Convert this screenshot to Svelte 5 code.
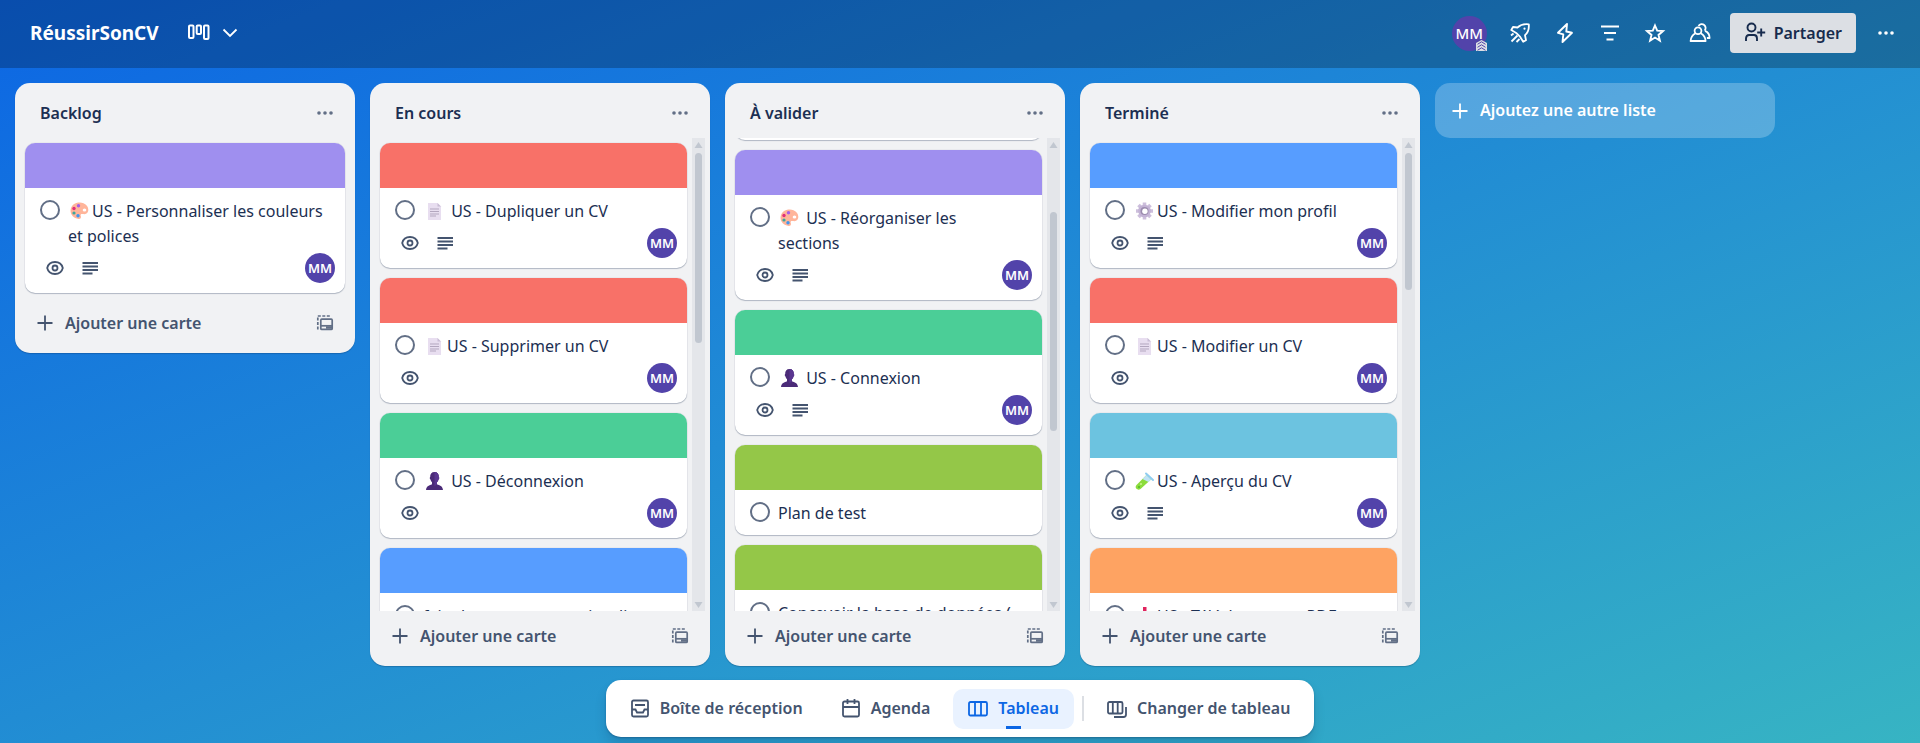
<script>
  const lists = [
    {
      name: 'Backlog',
      cards: [{ cover: '#9f8fef', emoji: 'palette', title: 'US - Personnaliser les couleurs et polices', watch: true, desc: true }]
    },
    {
      name: 'En cours',
      bar: { top: 0, height: 190 },
      cards: [
        { cover: '#f87168', emoji: 'page', space: true, title: 'US - Dupliquer un CV', watch: true, desc: true },
        { cover: '#f87168', emoji: 'page', title: 'US - Supprimer un CV', watch: true },
        { cover: '#4bce97', emoji: 'person', space: true, title: 'US - Déconnexion', watch: true },
        { cover: '#579dff', title: 'faire la page comme site client direct' }
      ]
    },
    {
      name: 'À valider',
      scroll: 93,
      bar: { top: 59, height: 219 },
      cards: [
        { cover: '#9f8fef', title: '' },
        { cover: '#9f8fef', emoji: 'palette', space: true, title: 'US - Réorganiser les sections', watch: true, desc: true },
        { cover: '#4bce97', emoji: 'person', space: true, title: 'US - Connexion', watch: true, desc: true },
        { cover: '#94c748', title: 'Plan de test' },
        { cover: '#94c748', title: 'Concevoir la base de données (' }
      ]
    },
    {
      name: 'Terminé',
      bar: { top: 0, height: 137 },
      cards: [
        { cover: '#579dff', emoji: 'gear', title: 'US - Modifier mon profil', watch: true, desc: true },
        { cover: '#f87168', emoji: 'page', title: 'US - Modifier un CV', watch: true },
        { cover: '#6cc3e0', emoji: 'tube', title: 'US - Aperçu du CV', watch: true, desc: true },
        { cover: '#fea362', emoji: 'inbox', title: 'US - Télécharger en PDF' }
      ]
    }
  ];

  function startAt(node, top) {
    node.scrollTop = top || 0;
  }
</script>

{#snippet dots()}
  <svg width="20" height="20" viewBox="0 0 20 20" fill="currentColor" aria-hidden="true">
    <circle cx="4" cy="10" r="1.8" /><circle cx="10" cy="10" r="1.8" /><circle cx="16" cy="10" r="1.8" />
  </svg>
{/snippet}

{#snippet plus()}
  <svg width="20" height="20" viewBox="0 0 20 20" fill="none" stroke="currentColor" stroke-width="1.8" aria-hidden="true">
    <path d="M10 2.5v15M2.5 10h15" />
  </svg>
{/snippet}

{#snippet emojiIcon(kind)}
  <svg class="emoji" width="24" height="18" viewBox="0 0 24 18" aria-hidden="true">
    {#if kind === 'palette'}
      <path d="M3 6C5 1 11-.5 15.500 1.200 19.500 2.700 21 6.500 20 9.500c-.8 2.400-3.100 3-5.200 2.500-1.800-.4-2.600.6-2 2.100.6 1.700-.5 3.100-2.200 2.800C5 16 1.200 11.500 3 6z" fill="#ffb59a" />
      <ellipse cx="16.500" cy="8" rx="1.800" ry="1.600" fill="#fff" />
      <circle cx="6" cy="6.500" r="1.700" fill="#e0307a" /><circle cx="10.500" cy="3.700" r="1.700" fill="#a45ee8" />
      <circle cx="6" cy="11" r="1.600" fill="#3fa79b" /><circle cx="10" cy="13.700" r="1.700" fill="#3f96f0" />
    {:else if kind === 'page'}
      <path d="M5 1h9.500L18 4.500V18H5z" fill="#e8def0" />
      <path d="M14.500 1 18 4.500h-3.500z" fill="#c8bcd4" />
      <path d="M7 7h9M7 9.500h9M7 12h9M7 14h6" stroke="#b3a7bf" stroke-width="1" />
    {:else if kind === 'person'}
      <path d="M11.500 0C8.500 0 7 2 7.200 5c-.7.300-.5 2 .3 2.500.4 1.500.9 2.200 1.500 2.800v2C6.500 13.500 3.500 13.700 3 18h17c-.5-4.300-3.500-4.500-6-5.700v-2c.6-.6 1.100-1.300 1.500-2.800.8-.5 1-2.200.3-2.500C16 2 14.500 0 11.500 0z" fill="#4b2b78" />
      <path d="M11.500 0C14.500 0 16 2 15.800 5c.7.300.5 2-.3 2.500-.4 1.500-.9 2.200-1.500 2.800v2l-2.500 2z" fill="#5a3690" />
    {:else if kind === 'gear'}
      <g stroke="#cdbfdc" stroke-width="3.600"><path d="M11.500.5v17M3 9h17M5.500 3l12 12M5.500 15l12-12" /></g>
      <circle cx="11.500" cy="9" r="6.300" fill="#c3b3d5" /><circle cx="11.500" cy="9" r="4" fill="#9b8bae" /><circle cx="11.900" cy="9.300" r="2.700" fill="#fff" />
    {:else if kind === 'tube'}
      <path d="M13.500 3 18 7.500 7.500 17C4.500 19 1 16 3.500 13z" fill="#8bdc3c" />
      <path d="M13.500 3 18 7.500 15.500 10 9.500 7z" fill="#bfe3f6" /><path d="m13 1.500 7 6.500" stroke="#8fcdf0" stroke-width="2" stroke-linecap="round" />
      <circle cx="8" cy="12" r="1" fill="#c9f58e" /><circle cx="6" cy="15" r="1" fill="#4eb52b" />
    {:else}
      <path d="M10 0h3.500v7H17l-5.200 6-5.300-6H10z" fill="#e0245e" />
      <path d="M3 11h4l2 3h5l2-3h4v7H3z" fill="#b9a8cd" />
    {/if}
  </svg>
{/snippet}

<div class="page">
  <header>
    <h1>RéussirSonCV</h1>
    <button class="view" aria-label="Vues">
      <svg width="22" height="18" viewBox="0 0 22 18" fill="none" stroke="currentColor" stroke-width="2" aria-hidden="true">
        <rect x="1" y="1.500" width="4.500" height="12.500" rx="1" /><rect x="8.700" y="1.500" width="4.300" height="8.500" rx="1" /><rect x="16" y="1.500" width="4.500" height="13.500" rx="1" />
      </svg>
      <svg width="16" height="16" viewBox="0 0 16 16" fill="none" stroke="currentColor" stroke-width="1.800" aria-hidden="true"><path d="m1.500 4.500 6.500 6.500 6.500-6.500" /></svg>
    </button>
    <div class="tools">
      <button class="me" aria-label="Membre MM">MM
        <span class="rank">
          <svg width="11" height="11" viewBox="0 0 11 11" aria-hidden="true"><path d="M0 3 5.500 0 11 3v8H0z" fill="#dcdfe4" /><path d="m1.500 4.300 4-2.500 4 2.500M1.500 7.300l4-2.500 4 2.500M1.500 10.300l4-2.500 4 2.500" fill="none" stroke="#5243aa" stroke-width="1" /></svg>
        </span>
      </button>
      <button class="tool" aria-label="Power-ups">
        <svg width="22" height="22" viewBox="0 0 22 22" fill="none" stroke="currentColor" stroke-width="1.800" stroke-linejoin="round" aria-hidden="true">
          <path d="M8.500 5.500C11.500 2.800 15.500 1.800 19.800 2.300 20.200 6.800 19 10.500 16 13.200l1 5-2.800 1.500-3-4.800-4-4L2.300 8 4 5z" /><circle cx="15.500" cy="6.700" r="1.100" fill="currentColor" stroke="none" /><path d="m2 13.500 2.500-2M2.500 19.500l6-6M7.500 20l3-3" />
        </svg>
      </button>
      <button class="tool" aria-label="Automatisation">
        <svg width="22" height="22" viewBox="0 0 22 22" fill="none" stroke="currentColor" stroke-width="1.900" stroke-linejoin="round" aria-hidden="true"><path d="M13 2 4 10.800l5.300 1.600L8.500 20 18 10.800l-5.700-1.300z" /></svg>
      </button>
      <button class="tool" aria-label="Filtres">
        <svg width="22" height="22" viewBox="0 0 22 22" fill="none" stroke="currentColor" stroke-width="1.800" aria-hidden="true"><path d="M2 4.500h18M5 11h12M7.500 17.500h7" /></svg>
      </button>
      <button class="tool" aria-label="Favori">
        <svg width="22" height="22" viewBox="0 0 22 22" fill="none" stroke="currentColor" stroke-width="1.900" aria-hidden="true"><path d="m11 3.500 2.200 5.200 5.800.4-4.500 3.800 1.400 5.700L11 15.500l-4.900 3.100 1.400-5.700L3 9.100l5.800-.4z" /></svg>
      </button>
      <button class="tool" aria-label="Visibilité">
        <svg width="24" height="22" viewBox="0 0 24 22" fill="none" stroke="currentColor" stroke-width="1.800" stroke-linejoin="round" aria-hidden="true">
          <circle cx="10" cy="8.800" r="3.400" /><path d="M7.500 11.300C4.500 13 2.800 15.500 2.600 19h15c-.2-3.500-1.900-6-4.900-7.700M10.500 4c1.300-2.200 4-2.500 5.700-1 1.700 1.400 1.900 3.900.4 5.600M17 8.800c3 1.200 4.600 3.700 4.600 7.200h-2.700" />
        </svg>
      </button>
      <button class="share">
        <svg width="22" height="22" viewBox="0 0 22 22" fill="none" stroke="currentColor" stroke-width="1.900" aria-hidden="true"><circle cx="7.500" cy="5.500" r="4" /><path d="M2 19v-2.500c0-2.500 1.200-3.500 3-3.500h5c1.800 0 3 1 3 3.500V19M17.200 6.500v8M13.200 10.500h8" /></svg>
        Partager
      </button>
      <button class="tool" aria-label="Menu">{@render dots()}</button>
    </div>
  </header>

  <main>
    {#each lists as list}
      <section class="list">
        <div class="head">
          <h2>{list.name}</h2>
          <button class="icon" aria-label="Actions de la liste">{@render dots()}</button>
        </div>
        <div class="body">
          <div class="cards" class:narrow={list.bar} use:startAt={list.scroll}>
            {#each list.cards as card}
              <article>
                <div class="cover" style="background: {card.cover}"></div>
                <div class="content">
                  <label class="title">
                    <input type="checkbox" />
                    <span>{#if card.emoji}{@render emojiIcon(card.emoji)}{/if}{card.space ? ' ' : ''}{card.title}</span>
                  </label>
                  {#if card.watch}
                    <div class="badges">
                      <svg width="20" height="20" viewBox="0 0 20 20" fill="none" stroke="currentColor" stroke-width="1.800" aria-hidden="true">
                        <path d="M2.200 10C3.200 6 6.300 4 10 4s6.800 2 7.800 6c-1 4-4.100 6-7.800 6s-6.800-2-7.800-6z" /><circle cx="10" cy="10" r="2.500" />
                      </svg>
                      {#if card.desc}
                        <svg width="20" height="20" viewBox="0 0 20 20" fill="none" stroke="currentColor" aria-hidden="true"><path d="M2.500 5h15.500M2.500 8.500h15.500M2.500 12h15.500M2.500 15.500h10" stroke-width="1.800" /></svg>
                      {/if}
                      <span class="avatar">MM</span>
                    </div>
                  {/if}
                </div>
              </article>
            {/each}
          </div>
          {#if list.bar}
            <div class="scrollbar" aria-hidden="true">
              <svg width="13" height="15" viewBox="0 0 13 15"><path d="M6.500 4 10.500 10h-8z" fill="#c1c7d0" /></svg>
              <div class="track"><div class="thumb" style="margin-top: {list.bar.top}px; height: {list.bar.height}px"></div></div>
              <svg width="13" height="15" viewBox="0 0 13 15"><path d="M2.500 6h8l-4 6z" fill="#c1c7d0" /></svg>
            </div>
          {/if}
        </div>
        <div class="foot">
          <button class="add">{@render plus()}Ajouter une carte</button>
          <button class="icon" aria-label="Créer depuis un modèle">
            <svg width="20" height="20" viewBox="0 0 20 20" fill="none" stroke="currentColor" stroke-width="1.700" aria-hidden="true">
              <path d="M2.800 16.500V3H15.500" stroke-dasharray="3 1.500" /><rect x="5.800" y="6.200" width="11.400" height="10.200" rx="1" /><path d="M6 12.800h11" /><path d="M11 14.500h6" stroke-width="2.500" />
            </svg>
          </button>
        </div>
      </section>
    {/each}
    <button class="new">{@render plus()}Ajoutez une autre liste</button>
  </main>

  <nav>
    <button>
      <svg width="20" height="20" viewBox="0 0 20 20" fill="none" stroke="currentColor" stroke-width="1.800" aria-hidden="true"><rect x="2" y="1.500" width="16" height="16" rx="1.500" /><path d="M5 6h10M2 10.500h3.500l1.500 3h6l1.500-3H18" /></svg>
      Boîte de réception
    </button>
    <button>
      <svg width="20" height="20" viewBox="0 0 20 20" fill="none" stroke="currentColor" stroke-width="1.800" aria-hidden="true"><rect x="2" y="2.500" width="16" height="15" rx="1.500" /><path d="M2 8h16M6.500 0v5M13.500 0v5" /></svg>
      Agenda
    </button>
    <button class="on" aria-current="page">
      <svg width="20" height="20" viewBox="0 0 20 20" fill="none" stroke="currentColor" stroke-width="1.800" aria-hidden="true"><rect x="1" y="3" width="18" height="13.500" rx="1.500" /><path d="M7 3v13.500M13 3v13.500" /></svg>
      Tableau
    </button>
    <span class="rule"></span>
    <button>
      <svg width="20" height="20" viewBox="0 0 20 20" fill="none" stroke="currentColor" stroke-width="1.800" aria-hidden="true"><rect x="1" y="3" width="14.500" height="11.500" rx="1.500" /><path d="M5.800 3v11.500M10.700 3v11.500M19 8v7.500c0 1.500-1 2.500-2.500 2.500H7" /></svg>
      Changer de tableau
    </button>
  </nav>
</div>

<style>
  :global(body) { margin: 0; }
  * { box-sizing: border-box; }
  .page {
    display: flex;
    flex-direction: column;
    height: 100vh;
    padding-bottom: 6px;
    background: linear-gradient(to bottom right, #0c66e4, #37b4c3);
    color: #1c2f52;
    font: 16px/25px "Noto Sans", "Open Sans", sans-serif;
  }
  button {
    display: flex;
    align-items: center;
    border: 0;
    padding: 0;
    background: none;
    color: inherit;
    font: inherit;
    cursor: pointer;
  }
  svg { flex: none; }
  h1, h2 { margin: 0; }
  header {
    display: flex;
    align-items: center;
    height: 68px;
    flex: none;
    padding: 0 14px 2px 30px;
    background: rgba(0, 0, 0, 0.24);
    color: #fff;
  }
  h1 { font-size: 19px; font-weight: 700; }
  .view { gap: 12px; margin-left: 29px; }
  .tools { display: flex; align-items: center; gap: 5px; margin-left: auto; }
  .tool { justify-content: center; width: 40px; height: 40px; }
  .me {
    position: relative;
    justify-content: center;
    width: 35px;
    height: 35px;
    margin-right: 8px;
    border-radius: 50%;
    background: #5243aa;
    font-weight: 500;
    font-size: 15px;
  }
  .rank { position: absolute; right: 0; bottom: 0; display: flex; }
  .share {
    gap: 8px;
    height: 40px;
    margin: 0 5px;
    padding: 0 14px;
    border-radius: 4px;
    background: #dcdfe4;
    color: #172b4d;
    font-weight: 600;
  }
  main {
    display: flex;
    align-items: flex-start;
    gap: 15px;
    flex: 1;
    min-height: 0;
    padding: 15px 15px 14px;
  }
  .list {
    display: flex;
    flex-direction: column;
    flex: 0 0 340px;
    max-height: 100%;
    border-radius: 15px;
    background: #f1f2f4;
    box-shadow: 0 1px 1px rgba(9, 30, 66, 0.25);
  }
  .head, .foot { display: flex; align-items: center; justify-content: space-between; flex: none; height: 55px; }
  .head { padding: 10px 10px 5px 25px; }
  .foot { padding: 5px 10px 10px 20px; color: #44546f; }
  h2 { font-size: 16px; font-weight: 600; }
  .icon { justify-content: center; width: 40px; height: 40px; color: #626f86; }
  .add { gap: 10px; height: 40px; font-weight: 600; }
  .body { display: flex; min-height: 0; flex: 0 1 auto; }
  .cards {
    display: flex;
    flex-direction: column;
    gap: 10px;
    flex: 1;
    min-width: 0;
    padding: 5px 10px;
    overflow-y: auto;
    scrollbar-width: none;
  }
  .cards.narrow { padding-right: 5px; }
  .narrow .title { padding-right: 12px; }
  article {
    flex: none;
    overflow: hidden;
    border-radius: 10px;
    background: #fff;
    box-shadow: 0 1px 1px rgba(9, 30, 66, 0.25), 0 0 1px rgba(9, 30, 66, 0.31);
  }
  .cover { height: 45px; }
  .content { padding: 11px 10px 9px 15px; }
  .title { display: flex; gap: 8px; min-height: 25px; }
  .title span { min-width: 0; }
  input {
    appearance: none;
    flex: none;
    width: 20px;
    height: 20px;
    margin: 1px 0 0;
    border: 2px solid #626f86;
    border-radius: 50%;
    background: #fff;
  }
  .emoji { vertical-align: -3px; }
  .badges { display: flex; align-items: center; gap: 15px; height: 30px; margin: 4px 0 1px; padding-left: 5px; color: #44546f; }
  .avatar {
    width: 30px;
    height: 30px;
    margin-left: auto;
    border-radius: 50%;
    background: #5243aa;
    color: #fff;
    font-size: 13px;
    font-weight: 600;
    line-height: 30px;
    text-align: center;
  }
  .scrollbar { display: flex; flex-direction: column; flex: none; width: 13px; margin-right: 5px; background: #e4e6ea; }
  .track { flex: 1; min-height: 0; padding: 0 3px; }
  .thumb { border-radius: 4px; background: #c1c7d0; }
  .new {
    flex: 0 0 340px;
    gap: 10px;
    height: 55px;
    padding: 0 15px;
    border-radius: 15px;
    background: rgba(255, 255, 255, 0.24);
    color: #fff;
    font-weight: 600;
  }
  nav {
    display: flex;
    align-items: center;
    align-self: center;
    gap: 8px;
    flex: none;
    height: 57px;
    padding: 0 9px;
    border-radius: 15px;
    background: #fff;
    box-shadow: 0 1px 2px rgba(9, 30, 66, 0.3), 0 8px 12px rgba(9, 30, 66, 0.15);
    color: #44546f;
  }
  nav button { position: relative; gap: 10px; height: 40px; padding: 0 15px; border-radius: 10px; font-weight: 600; }
  .on { background: #e9f2ff; color: #0c66e4; }
  .on::after { content: ""; position: absolute; left: 50%; bottom: 0; width: 15px; height: 3px; margin-left: -8px; background: #0c66e4; }
  .rule { width: 2px; height: 25px; background: #dcdfe4; }
</style>
